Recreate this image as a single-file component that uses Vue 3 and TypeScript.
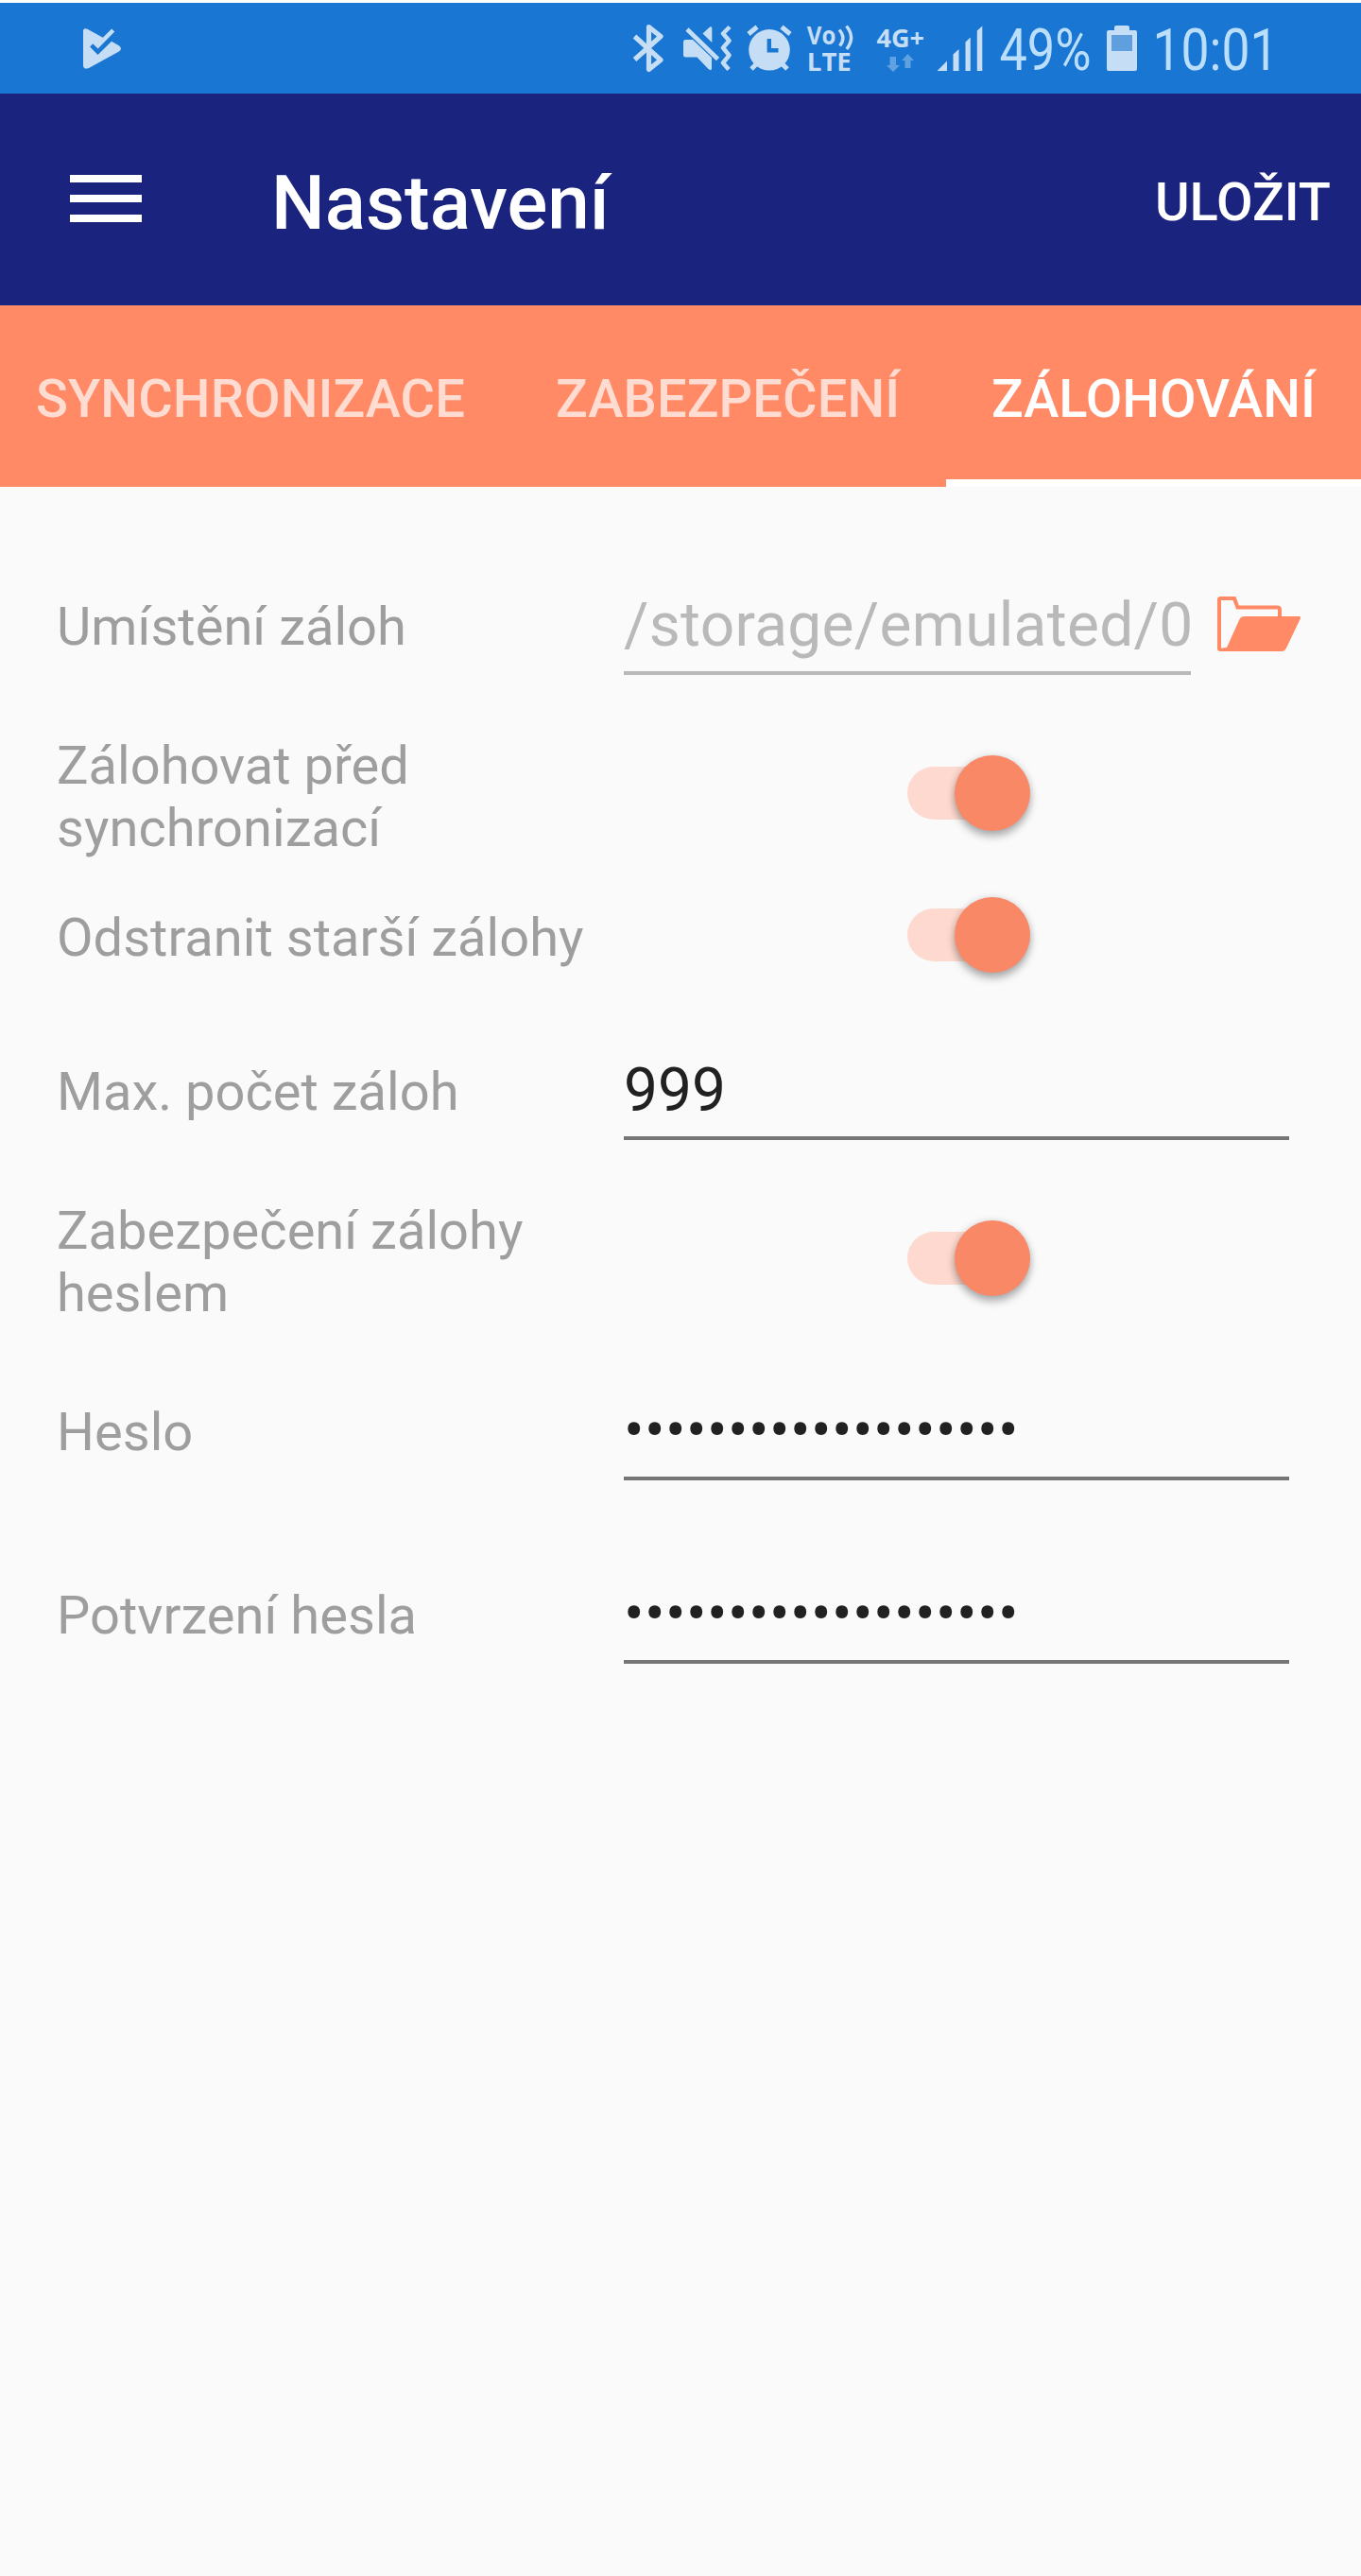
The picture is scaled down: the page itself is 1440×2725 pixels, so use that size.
<script setup lang="ts">
import { ref } from 'vue'

interface Row {
  kind: 'path' | 'toggle' | 'number' | 'password'
  label: string
  value?: string
  on?: boolean
}

const tabs = ['SYNCHRONIZACE', 'ZABEZPEČENÍ', 'ZÁLOHOVÁNÍ']
const activeTab = ref(2)

const rows = ref<Row[]>([
  { kind: 'path', label: 'Umístění záloh', value: '/storage/emulated/0' },
  { kind: 'toggle', label: 'Zálohovat před synchronizací', on: true },
  { kind: 'toggle', label: 'Odstranit starší zálohy', on: true },
  { kind: 'number', label: 'Max. počet záloh', value: '999' },
  { kind: 'toggle', label: 'Zabezpečení zálohy heslem', on: true },
  { kind: 'password', label: 'Heslo', value: '•'.repeat(19) },
  { kind: 'password', label: 'Potvrzení hesla', value: '•'.repeat(19) },
])
</script>

<template>
  <div class="screen">
    <header class="status">
      <svg class="play" width="40" height="43" viewBox="88 29.5 40 43">
        <path d="M88 32.5Q88 28.500 92.500 30.200L108.800 39.300L118.200 30L121.300 33L103.600 51L98.200 45.800L95.200 49L103.500 57.500L118 43.200L126.300 48Q129.500 51 126.300 53.800L94 71.500Q88.500 73.500 88 69Z" />
      </svg>
      <div class="icons">
        <svg class="bt" width="32" height="52" viewBox="670 25 32 52">
          <path d="M671.500 38.500L699 63.500L686.500 73.500V28.500L699 38.500L671.500 63" fill="none" stroke="#c5ddf5" stroke-width="5.2" stroke-linejoin="round" />
        </svg>
        <svg class="mute" width="52" height="50" viewBox="722 26 52 50">
          <path d="M725.500 42H733L753 61V73.500Q751.500 74.500 749.500 73L737.500 60.500H725.500Q723 60.500 723 58V44.500Q723 42 725.500 42Z" />
          <path d="M743.500 35.500L751 28.500Q753.300 27.500 753.300 30V45Z" />
          <path d="M727 31L759.500 62.500" fill="none" stroke="#c5ddf5" stroke-width="4.600" />
          <path d="M772 28.500L765 35.500L771.500 43L765 50.500L771.500 58.500L765 66.500L771 73.500" fill="none" stroke="#c5ddf5" stroke-width="4.500" stroke-linejoin="round" />
        </svg>
        <svg class="alarm" width="48" height="50" viewBox="789.5 26 48 50">
          <circle cx="813.500" cy="52.800" r="21.800" />
          <path d="M791.500 36L800.500 28.500M826.500 28.500L835.500 36M794.500 73L801 66.500M826 66.500L832.500 73" fill="none" stroke="#c5ddf5" stroke-width="5" />
          <path d="M813.300 41V53.200H823" fill="none" stroke="#1976d2" stroke-width="4.400" />
        </svg>
        <svg class="volte" width="50" height="50" viewBox="853 26 50 50">
          <text x="853.800" y="47.300" font-size="26.500" textLength="30.500" lengthAdjust="spacingAndGlyphs">Vo</text>
          <text x="853.800" y="74.600" font-size="27" textLength="47" lengthAdjust="spacingAndGlyphs">LTE</text>
          <path d="M888 31.500Q895.500 40 888.500 48.500M895.500 27.500Q905.500 39.500 895.800 52" fill="none" stroke="#c5ddf5" stroke-width="3.400" />
        </svg>
        <svg class="net" width="51" height="50" viewBox="927 26 51 50">
          <text x="927.500" y="49.600" font-size="26.500" textLength="50.500" lengthAdjust="spacingAndGlyphs">4G+</text>
          <path fill="#5fa1e1" d="M941.500 60H948V69H952L945 76L938 69H941.500ZM957.500 72H963.500V64H967L960.500 57L954 64H957.500Z" />
        </svg>
        <svg class="signal" width="49" height="50" viewBox="990.5 26 49 50">
          <path d="M991 75L1001.500 64.500V75ZM1008 57.500L1014 52V75H1008ZM1021 44.500L1026.300 39.500V75H1021ZM1033.300 32.500L1038.800 27.500V75H1033.300Z" />
        </svg>
        <svg class="percent" width="96" height="50" viewBox="1058 26 96 50">
          <text class="digits" x="1057.500" y="74" font-size="60.500" textLength="97" lengthAdjust="spacingAndGlyphs">49%</text>
        </svg>
        <svg class="battery" width="32" height="48" viewBox="1171 27 32 48">
          <path d="M1179 32V29Q1179 27 1181 27H1193Q1195 27 1195 29V32H1201Q1203 32 1203 34V73Q1203 75 1201 75H1173Q1171 75 1171 73V34Q1171 32 1173 32Z" />
          <path fill="#5f9fde" d="M1176 37H1198V54H1176Z" />
        </svg>
        <svg class="clock" width="132" height="50" viewBox="1218 26 132 50">
          <text class="digits" x="1219.500" y="74" font-size="60.500" textLength="133" lengthAdjust="spacingAndGlyphs">10:01</text>
        </svg>
      </div>
    </header>

    <div class="appbar">
      <svg class="menu" width="76" height="50" viewBox="0 0 76 50">
        <path d="M0 0H76V8H0ZM0 21H76V29H0ZM0 42H76V50H0Z" fill="#fff" />
      </svg>
      <h1>Nastavení</h1>
      <button class="save" type="button">ULOŽIT</button>
    </div>

    <nav class="tabs">
      <button
        v-for="(tab, i) in tabs"
        :key="tab"
        type="button"
        class="tab"
        :class="{ active: i === activeTab }"
        @click="activeTab = i"
      ><span>{{ tab }}</span></button>
    </nav>

    <main class="form">
      <div v-for="row in rows" :key="row.label" class="row" :class="row.kind">
        <div class="label">{{ row.label }}</div>
        <div v-if="row.kind === 'toggle'" class="control">
          <div class="switch" :class="{ on: row.on }" @click="row.on = !row.on">
            <div class="thumb"></div>
          </div>
        </div>
        <template v-else>
          <div class="input"><span>{{ row.value }}</span></div>
          <svg v-if="row.kind === 'path'" class="folder" width="90" height="60" viewBox="1287 630 90 60">
            <path d="M1290 687V634Q1290 633 1291.500 633H1306L1309.500 642.500H1351.500Q1354 642.500 1354 645V655" fill="none" stroke="#ff8a65" stroke-width="4" />
            <path fill="#ff8a65" d="M1317 652H1374.500Q1376.500 652 1376 654L1361 685.500Q1359 689 1356 689H1291Q1288 689 1288 686L1298 685L1311.500 655Q1313 652 1317 652Z" />
          </svg>
        </template>
      </div>
    </main>
  </div>
</template>

<style>
body {
  margin: 0;
  background: #fafafa;
}
</style>

<style scoped>
.screen {
  width: 1440px;
  min-height: 2725px;
  background: #fafafa;
  font-family: Roboto, 'Liberation Sans', sans-serif;
}
svg {
  display: block;
  flex: none;
  overflow: visible;
}
button {
  border: 0;
  padding: 0;
  background: none;
  font: inherit;
  white-space: nowrap;
}

.status {
  display: flex;
  height: 96px;
  border-top: 3px solid #fff;
  background: #1976d2;
  fill: #c5ddf5;
}
.status text {
  font-family: 'Open Sans', 'Noto Sans', sans-serif;
  font-weight: 700;
}
.status text.digits {
  font-family: Roboto, sans-serif;
  font-weight: 400;
  fill: #bbdefb;
}
.play { margin: 26.5px 0 0 88px; }
.icons {
  display: flex;
  margin: 23px 0 0 542px;
}
.bt { margin-top: -1px; }
.mute { margin-left: 20px; }
.alarm { margin-left: 15.5px; }
.volte { margin-left: 15.5px; }
.net { margin-left: 24px; }
.signal { margin-left: 12.5px; }
.percent { margin-left: 18.5px; }
.battery { margin: 1px 0 0 17px; }
.clock { margin-left: 15px; }

.appbar {
  display: flex;
  height: 224px;
  background: #1a237e;
  color: #fff;
}
.menu { margin: 86px 0 0 74px; }
h1 {
  flex: 1;
  margin: 69px 0 0 137px;
  font-size: 80px;
  font-weight: 500;
  line-height: 94px;
}
.save {
  height: 66px;
  margin: 82px 32px 0 0;
  color: #fff;
  font-size: 56px;
  font-weight: 500;
  line-height: 66px;
}

.tabs {
  display: flex;
  height: 192px;
  background: #ff8a65;
}
.tab {
  display: flex;
  box-sizing: border-box;
  padding: 66px 48px 0;
  border-bottom: 8px solid transparent;
  color: rgba(255, 255, 255, 0.7);
  font-size: 56px;
  font-weight: 500;
  line-height: 66px;
}
.tab:first-child {
  width: 539px;
  padding-left: 38px;
  letter-spacing: 0.1px;
}
.tab:nth-child(2) {
  width: 462px;
  padding-left: 49px;
  letter-spacing: 0.1px;
}
.tab:last-child { width: 439px; }
.tab.active {
  border-bottom-color: #fff;
  color: #fff;
}

.form { padding: 57px 0 0 60px; }
.row {
  display: grid;
  grid-template-columns: 600px 704px;
}
.label {
  color: #9e9e9e;
  font-size: 56px;
  line-height: 66px;
  letter-spacing: 0.03px;
}
.path,
.number,
.password {
  padding: 51px 0 52px;
}
.path { grid-template-columns: 600px 600px auto; }
.path .label,
.number .label,
.password .label { padding-top: 7px; }
.input {
  box-sizing: border-box;
  height: 91px;
  padding-top: 1px;
  border-bottom: 4px solid #757575;
  color: #212121;
  font-size: 64px;
  line-height: 75px;
  white-space: nowrap;
}
.path .input {
  border-color: #b8b8b8;
  color: #b9b9b9;
  letter-spacing: 0.3px;
}
.password .input { letter-spacing: 0.4px; }
.folder { margin: 7px 0 0 27px; }

.toggle {
  align-items: center;
  min-height: 98px;
  padding: 11px 0 23px;
}
.control {
  display: flex;
  padding: 0 0 8px 300px;
}
.toggle + .toggle .control { padding-bottom: 6px; }
.switch {
  display: flex;
  align-items: center;
  width: 130px;
  height: 56px;
  border-radius: 28px;
  background: #d0d0d0;
}
.switch.on {
  justify-content: flex-end;
  background: #fdd9cf;
}
.thumb {
  flex: none;
  width: 80px;
  height: 80px;
  border-radius: 50%;
  background: #f1f1f1;
  box-shadow: 0 6px 8px rgba(0, 0, 0, 0.28), 0 0 8px rgba(0, 0, 0, 0.12);
}
.switch.on .thumb { background: #f98866; }
</style>
